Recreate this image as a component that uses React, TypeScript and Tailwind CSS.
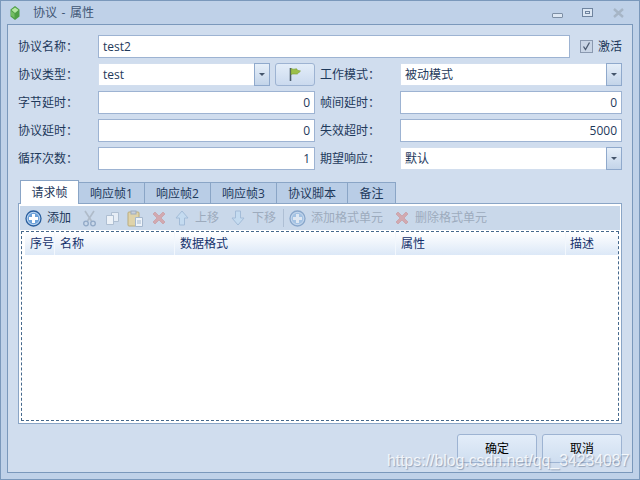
import type { ReactNode } from "react";

function Label({ children, w }: { children: string; w: string }) {
  return <div className={`${w} shrink-0 text-[12px] leading-[23px] text-[#1e395b]`}>{children}</div>;
}

function Input({ value, right, className }: { value?: string; right?: boolean; className: string }) {
  return (
    <div
      className={`${className} h-[23px] bg-white border border-[#9db3d2] text-[12px] leading-[21px] text-[#1e395b] px-[4px] ${right ? "text-right" : "text-left"}`}
    >
      {value}
    </div>
  );
}

function Combo({ value, className }: { value: string; className: string }) {
  return (
    <div className={`${className} h-[23px] flex bg-white border border-[#d2deee]`}>
      <div className="flex-1 pl-[4px] text-[12px] leading-[21px] text-[#1e395b]">{value}</div>
      <div className="w-[16px] -my-px -mr-px flex items-center justify-center border border-[#8fa9cc] bg-gradient-to-b from-[#e6eff9] to-[#c3d4e9]">
        <div className="w-0 h-0 border-x-[3px] border-x-transparent border-t-[3px] border-t-[#44556b]" />
      </div>
    </div>
  );
}

function Plus({ faded }: { faded?: boolean }) {
  return (
    <svg width="17" height="17" viewBox="0 0 17 17" className={faded ? "opacity-40" : ""}>
      <circle cx="8.5" cy="8.5" r="7.5" fill="#bcd6f2" stroke="#2a5f9e" strokeWidth="1.3" />
      <circle cx="8.5" cy="8.5" r="5.8" fill="#6da2da" />
      <path d="M7 4h3v3h3v3h-3v3H7v-3H4V7h3z" fill="#fff" />
    </svg>
  );
}
function Scissors() {
  return (
    <svg width="15" height="17" viewBox="0 0 15 17" className="opacity-60">
      <path d="M3 1l6.500 10M12 1L5.500 11" stroke="#9fa9b4" strokeWidth="1.600" fill="none" />
      <circle cx="4" cy="13.5" r="2.3" fill="none" stroke="#6d8bb0" strokeWidth="1.3" />
      <circle cx="11" cy="13.5" r="2.3" fill="none" stroke="#6d8bb0" strokeWidth="1.3" />
    </svg>
  );
}
function Copy() {
  return (
    <svg width="15" height="15" viewBox="0 0 15 15" className="opacity-80">
      <path d="M6.500 1.500h7v9h-7z" fill="#eef3f9" stroke="#a9b9cd" />
      <path d="M1.500 4.500h7v9h-7z" fill="#f6f9fc" stroke="#a9b9cd" />
    </svg>
  );
}
function Paste() {
  return (
    <svg width="17" height="17" viewBox="0 0 17 17" className="opacity-90">
      <rect x="1" y="2" width="11" height="14" rx="1" fill="#e2d3a4" stroke="#b9a873" />
      <rect x="4" y="1" width="5" height="3" fill="#c7cfda" stroke="#9aa7b8" />
      <path d="M8.500 7.500h7v9h-7z" fill="#f2f6fb" stroke="#a2b4ca" />
      <path d="M10 11h4M10 13h4" stroke="#a2b4ca" />
    </svg>
  );
}
function Cross() {
  return (
    <svg width="14" height="14" viewBox="0 0 14 14" className="opacity-60">
      <path d="M3 1l4 4 4-4 2 2-4 4 4 4-2 2-4-4-4 4-2-2 4-4-4-4z" fill="#d98a8a" stroke="#c46b6b" strokeWidth="0.6" />
    </svg>
  );
}
function Arrow({ down }: { down?: boolean }) {
  return (
    <svg width="14" height="16" viewBox="0 0 14 16" className="opacity-80">
      <path d={down ? "M4.500 1h5v7H13l-6 7-6-7h3.500z" : "M7 1l6 7H9.500v7h-5V8H1z"} fill="#c4dcf2" stroke="#9ab6d4" />
    </svg>
  );
}
function Flag() {
  return (
    <svg width="14" height="15" viewBox="0 0 14 15">
      <path d="M2.500 1v13" stroke="#4a5a6a" strokeWidth="1.600" />
      <path d="M3 1.500c3 1.600 5-.4 6 .6 0 1 .6 1.400 3.500 1.900-2 1.600-2.500 3-3.500 3-2 .4-3.500-.6-6 .5z" fill="#9cc04a" stroke="#7a9c32" strokeWidth="0.6" />
    </svg>
  );
}
function Gem() {
  return (
    <svg width="10" height="14" viewBox="0 0 10 14">
      <path d="M5 0l4.500 3.500v7L5 14 .5 10.500v-7z" fill="#4f9f45" />
      <path d="M5 1.500L8.500 4 5 7 1.500 4z" fill="#b5e6a3" />
      <path d="M1 5l3.500 2.500V12L1 9.500z" fill="#74bd62" />
    </svg>
  );
}

function Tab({ label, w }: { label: string; w: string }) {
  return (
    <div className={`${w} h-[21px] bg-[#b9cde6] border-t border-r border-[#8aa5c6] text-center text-[12px] leading-[21px] text-[#1e395b]`}>
      {label}
    </div>
  );
}

function Tool({ icon, label, gap, ml, dim }: { icon: ReactNode; label?: string; gap?: string; ml: string; dim?: boolean }) {
  return (
    <div className={`${ml} flex items-center ${gap ?? ""}`}>
      {icon}
      {label && <span className={`text-[12px] ${dim ? "text-[#9dabbd]" : "text-[#1e395b]"}`}>{label}</span>}
    </div>
  );
}

function Head({ label, w }: { label: string; w: string }) {
  return (
    <div className={`${w} shrink-0 h-full border-r border-[#f2f7fd] pl-[5px] text-[12px] leading-[23px] text-[#15316b]`}>{label}</div>
  );
}

export default function App() {
  return (
    <div className="relative w-[640px] h-[480px] overflow-hidden bg-[#bfd1e8] border border-[#7a98bb] flex flex-col font-['Open_Sans','Noto_Sans_CJK_SC',sans-serif]">
      <div className="h-[23px] shrink-0 flex items-center pl-[9px] pr-[15px]">
        <Gem />
        <span className="ml-[13px] text-[12px] text-[#3f5675] [word-spacing:1.500px]">协议 - 属性</span>
        <div className="ml-auto flex items-center">
          <div className="mt-[6px] w-[11px] h-[5px] bg-[#dde7f3] border border-[#7d8fa5] rounded-[1px]" />
          <div className="ml-[19px] w-[11px] h-[9px] border border-[#6f849f] bg-[#dbe6f3] flex items-center justify-center">
            <div className="w-[5px] h-[3px] border border-[#6f849f]" />
          </div>
          <svg width="11" height="10" viewBox="0 0 11 10" className="ml-[20px]">
            <path d="M1 1l9 8M10 1L1 9" stroke="#a6b5c6" strokeWidth="2.4" />
          </svg>
        </div>
      </div>
      <div className="ml-[6px] mr-[6px] mb-[6px] flex-1 flex flex-col bg-[#d0ddee] border border-[#7a98bb] pl-[10px] pr-[10px] pt-[10px]">
        <div className="flex items-center h-[23px]">
          <Label w="w-[80px]">协议名称：</Label>
          <Input value="test2" className="w-[472px]" />
          <div className="ml-[10px] shrink-0 w-[13px] h-[13px] border border-[#8a99b0] bg-[#c9d5e6] flex items-center justify-center">
            <svg width="9" height="9" viewBox="0 0 9 9">
              <path d="M1.500 4.500l2 3 4-7" fill="none" stroke="#4b5a70" strokeWidth="1.3" />
            </svg>
          </div>
          <span className="ml-[5px] shrink-0 whitespace-nowrap text-[12px] text-[#1e395b]">激活</span>
        </div>
        <div className="mt-[5px] flex items-center">
          <Label w="w-[80px]">协议类型：</Label>
          <Combo value="test" className="w-[172px]" />
          <div className="ml-[5px] w-[40px] h-[23px] rounded-[3px] border border-[#9db3d2] bg-gradient-to-b from-[#e3edf9] to-[#cbdaee] flex items-center justify-center">
            <Flag />
          </div>
          <Label w="ml-[5px] w-[80px]">工作模式：</Label>
          <Combo value="被动模式" className="w-[222px]" />
        </div>
        <div className="mt-[5px] flex items-center">
          <Label w="w-[80px]">字节延时：</Label>
          <Input value="0" right className="w-[217px]" />
          <Label w="ml-[5px] w-[80px]">帧间延时：</Label>
          <Input value="0" right className="w-[222px]" />
        </div>
        <div className="mt-[5px] flex items-center">
          <Label w="w-[80px]">协议延时：</Label>
          <Input value="0" right className="w-[217px]" />
          <Label w="ml-[5px] w-[80px]">失效超时：</Label>
          <Input value="5000" right className="w-[222px]" />
        </div>
        <div className="mt-[5px] flex items-center">
          <Label w="w-[80px]">循环次数：</Label>
          <Input value="1" right className="w-[217px]" />
          <Label w="ml-[5px] w-[80px]">期望响应：</Label>
          <Combo value="默认" className="w-[222px]" />
        </div>

        <div className="mt-[10px] ml-[2px] flex items-end h-[23px] relative z-10">
          <div className="w-[59px] h-[24px] -mb-px bg-white border-t border-x border-[#8aa5c6] text-center text-[12px] leading-[23px] text-[#1e395b]">
            请求帧
          </div>
          <Tab label="响应帧1" w="w-[66px]" />
          <Tab label="响应帧2" w="w-[66px]" />
          <Tab label="响应帧3" w="w-[66px]" />
          <Tab label="协议脚本" w="w-[71px]" />
          <Tab label="备注" w="w-[48px]" />
        </div>
        <div className="h-[221px] border border-[#8aa5c6] bg-white pt-[2px] px-[1px] pb-[2px] flex flex-col">
          <div className="h-[24px] shrink-0 bg-[#c9d8ea] flex items-center pl-[5px]">
            <Tool icon={<Plus />} label="添加" gap="gap-[5px]" ml="ml-0" />
            <Tool icon={<Scissors />} ml="ml-[11px]" />
            <Tool icon={<Copy />} ml="ml-[8px]" />
            <Tool icon={<Paste />} ml="ml-[7px]" />
            <Tool icon={<Cross />} ml="ml-[8px]" />
            <Tool icon={<Arrow />} label="上移" gap="gap-[6px]" ml="ml-[9px]" dim />
            <Tool icon={<Arrow down />} label="下移" gap="gap-[7px]" ml="ml-[12px]" dim />
            <div className="ml-[7px] w-[1px] h-[18px] bg-[#aebfd4]" />
            <Tool icon={<Plus faded />} label="添加格式单元" gap="gap-[5px]" ml="ml-[5px]" dim />
            <Tool icon={<Cross />} label="删除格式单元" gap="gap-[6px]" ml="ml-[12px]" dim />
          </div>
          <div className="mt-px mx-px flex-1 border border-dashed border-[#45688c] pl-[3px]">
            <div className="h-[23px] flex bg-gradient-to-b from-[#ffffff] to-[#dce8f7]">
              <Head label="序号" w="w-[30px]" />
              <Head label="名称" w="w-[120px]" />
              <Head label="数据格式" w="w-[221px]" />
              <Head label="属性" w="w-[170px]" />
              <div className="flex-1 pl-[4px] text-[12px] leading-[23px] text-[#15316b]">描述</div>
            </div>
          </div>
        </div>
        <div className="mt-[10px] flex justify-end gap-[5px]">
          <div className="w-[80px] h-[29px] rounded-[3px] border border-[#9db3d2] bg-gradient-to-b from-[#e3edf9] to-[#cfdef0] text-center text-[12px] leading-[27px] text-black">确定</div>
          <div className="w-[80px] h-[29px] rounded-[3px] border border-[#9db3d2] bg-gradient-to-b from-[#e3edf9] to-[#cfdef0] text-center text-[12px] leading-[27px] text-black">取消</div>
        </div>
      </div>
      <div className="absolute left-[386px] top-[450px] text-[15.8px] leading-[20px] text-white/80 whitespace-nowrap font-['Liberation_Sans',sans-serif] [text-shadow:1px_1px_1px_rgba(70,90,120,.45)]">
        https://blog.csdn.net/qq_34234087
      </div>
    </div>
  );
}
